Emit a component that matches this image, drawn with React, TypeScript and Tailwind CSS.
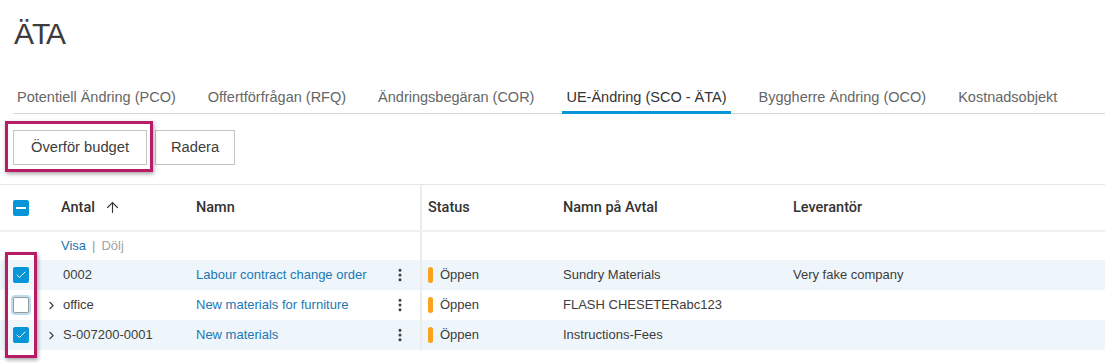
import React from "react";
import { ArrowUp, ChevronRight, EllipsisVertical, Check } from "lucide-react";

const tabs = [
  "Potentiell Ändring (PCO)",
  "Offertförfrågan (RFQ)",
  "Ändringsbegäran (COR)",
  "UE-Ändring (SCO - ÄTA)",
  "Byggherre Ändring (OCO)",
  "Kostnadsobjekt",
];

const rows = [
  { id: "0002", name: "Labour contract change order", avtal: "Sundry Materials", lev: "Very fake company", checked: true, expand: false },
  { id: "office", name: "New materials for furniture", avtal: "FLASH CHESETERabc123", lev: "", checked: false, expand: true },
  { id: "S-007200-0001", name: "New materials", avtal: "Instructions-Fees", lev: "", checked: true, expand: true },
];

function Checkbox({ checked }: { checked: boolean }) {
  if (checked) {
    return (
      <div className="w-4 h-4 rounded-[2px] bg-[#0696d7] flex items-center justify-center">
        <Check className="w-3 h-3 text-white" strokeWidth={2} />
      </div>
    );
  }
  return <div className="w-4 h-4 rounded-[2px] bg-white border border-[#9a9a9a] ring-2 ring-[#bcdcf1]" />;
}

export default function App() {
  return (
    <div className="w-full min-h-screen bg-white text-[#3c3c3c] font-['Liberation_Sans',Arial,sans-serif]">
      {/* Title */}
      <div className="pl-[14px] pt-[16px]">
        <h1 className="text-[30px] leading-[36px] tracking-[-2px]">ÄTA</h1>
      </div>

      {/* Tabs */}
      <div className="ml-[13px] mt-[30px] flex gap-6 border-b border-[#d6d6d6] text-[14.5px]">
        {tabs.map((t, i) => {
          const active = i === 3;
          return (
            <div
              key={t}
              className={`h-[32px] px-[4px] flex items-center -mb-px ${
                active ? "border-b-[3px] border-[#0696d7] text-[#333333] pt-[3px]" : "text-[#666666]"
              }`}
            >
              {t}
            </div>
          );
        })}
      </div>

      {/* Action buttons */}
      <div className="ml-[13px] mt-[16px] flex gap-2">
        <div className="relative">
          <button className="h-[35px] px-[17px] border border-[#c4c4c4] bg-white text-[14.7px] text-[#3c3c3c]">
            Överför budget
          </button>
          <div className="absolute -left-[8px] -top-[9px] -right-[6px] -bottom-[7px] border-[3px] border-[#b91c66] shadow-[1px_2px_4px_rgba(0,0,0,0.35)] pointer-events-none" />
        </div>
        <button className="h-[35px] px-[15px] border border-[#c4c4c4] bg-white text-[14.7px] text-[#3c3c3c]">
          Radera
        </button>
      </div>

      {/* Table */}
      <div className="relative mt-[19px] border-t border-[#e6e6e6] text-[13px]">
        {/* Header */}
        <div className="flex h-[47px] border-b-2 border-[#f0f0f0] font-medium font-['Roboto',sans-serif] text-[#333333]">
          <div className="w-[422px] flex items-center border-r-2 border-[#ececec]">
            <div className="w-[45px] pl-[13px]">
              <div className="w-4 h-4 rounded-[2px] bg-[#0696d7] flex items-center justify-center">
                <div className="w-[10px] h-[2px] bg-white" />
              </div>
            </div>
            <div className="w-[16px]" />
            <div className="w-[135px] flex items-center gap-[9px]">
              <span className="text-[14.5px]">Antal</span>
              <ArrowUp className="w-[17px] h-[17px]" strokeWidth={1.6} />
            </div>
            <div className="text-[14.5px]">Namn</div>
          </div>
          <div className="flex items-center text-[14.5px]">
            <div className="w-[141px] pl-[6px]">Status</div>
            <div className="w-[230px]">Namn på Avtal</div>
            <div>Leverantör</div>
          </div>
        </div>

        {/* Visa | Dölj */}
        <div className="flex h-[28px]">
          <div className="w-[422px] flex items-center border-r-2 border-[#ececec] pl-[61px]">
            <span className="text-[#1c77b4]">Visa</span>
            <span className="mx-[6px] text-[#9a9a9a]">|</span>
            <span className="text-[#a3a3a3]">Dölj</span>
          </div>
        </div>

        {/* Rows */}
        {rows.map((r, i) => (
          <div key={r.id} className={`flex h-[30px] ${i % 2 === 0 ? "bg-[#eef6fb]" : "bg-white"}`}>
            <div className="w-[422px] flex items-center border-r-2 border-[#ececec]">
              <div className="w-[45px] pl-[13px]">
                <Checkbox checked={r.checked} />
              </div>
              <div className="w-[16px] flex items-center">
                {r.expand && <ChevronRight className="w-[13px] h-[13px] text-[#3c3c3c]" strokeWidth={2} />}
              </div>
              <div className="w-[135px] pl-[2px] text-[#3c3c3c]">{r.id}</div>
              <div className="flex-1 text-[#1c77b4]">{r.name}</div>
              <div className="w-[36px] flex items-center justify-center pr-[4px]">
                <EllipsisVertical className="w-4 h-4 text-[#3c3c3c]" strokeWidth={2.5} />
              </div>
            </div>
            <div className="flex items-center text-[#3c3c3c]">
              <div className="w-[141px] pl-[6px] flex items-center gap-[7px]">
                <div className="w-[5px] h-[16px] rounded-full bg-[#faa21b]" />
                <span>Öppen</span>
              </div>
              <div className="w-[230px]">{r.avtal}</div>
              <div>{r.lev}</div>
            </div>
          </div>
        ))}

        {/* Annotation around row checkboxes */}
        <div className="absolute left-[5px] top-[67px] w-[32px] h-[106px] border-[3px] border-[#b91c66] shadow-[1px_2px_4px_rgba(0,0,0,0.35)] pointer-events-none" />
      </div>
    </div>
  );
}
